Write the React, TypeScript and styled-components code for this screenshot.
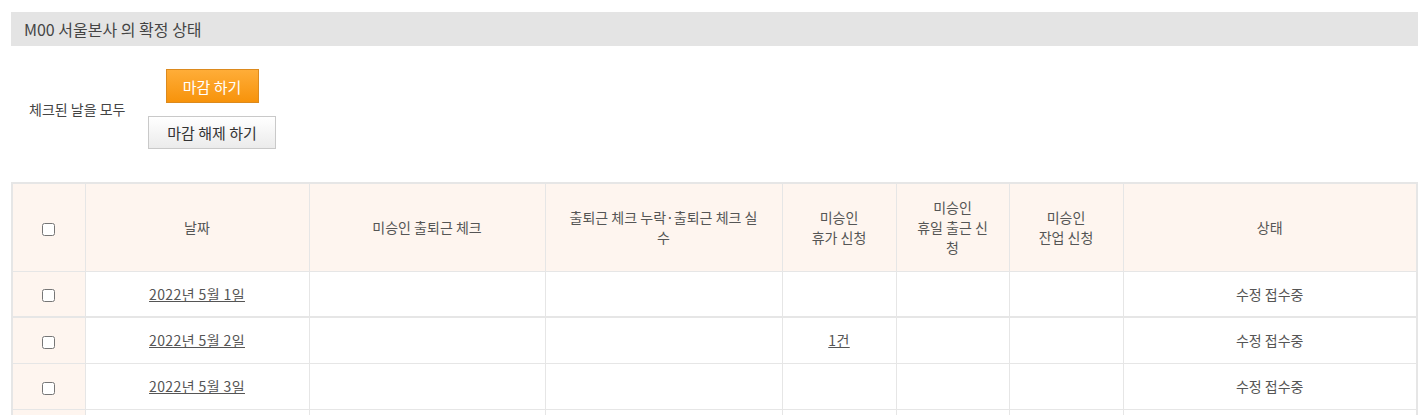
import React from "react";
import styled, { createGlobalStyle } from "styled-components";

const Global = createGlobalStyle`
  html, body { margin: 0; padding: 0; background: #fff; }
  body { font-family: "Noto Sans CJK KR", "Noto Sans", sans-serif; color: #555; }
`;

const Page = styled.div`
  padding: 12px 10px 0 11px;
`;

const TitleBar = styled.div`
  height: 34px;
  background: #e4e4e4;
  display: flex;
  align-items: center;
  padding-left: 13px;
  font-size: 16px;
  color: #444;
`;

const ActionRow = styled.div`
  display: flex;
  align-items: center;
  padding-left: 18px;
  margin-top: 23px;
`;

const ActionLabel = styled.div`
  width: 119px;
  font-size: 14px;
  color: #444;
`;

const ButtonColumn = styled.div`
  display: flex;
  flex-direction: column;
  align-items: center;
  gap: 13px;
`;

const Button = styled.button<{ $primary?: boolean }>`
  font-family: inherit;
  font-size: 15px;
  box-sizing: border-box;
  cursor: pointer;
  padding: 0 12px;
  height: ${(p) => (p.$primary ? "34px" : "33px")};
  min-width: ${(p) => (p.$primary ? "93px" : "128px")};
  color: ${(p) => (p.$primary ? "#fff" : "#333")};
  border: 1px solid ${(p) => (p.$primary ? "#dc8a1e" : "#c9c9c9")};
  background: ${(p) =>
    p.$primary
      ? "linear-gradient(#ffad38, #f7930b)"
      : "linear-gradient(#ffffff, #ebebeb)"};
  border-radius: 0;
`;

const Table = styled.table`
  margin-top: 33px;
  width: 100%;
  border-collapse: collapse;
  border: 2px solid #e6e6e6;
  table-layout: fixed;
  font-size: 14px;
`;

const HeadCell = styled.th<{ $w?: number }>`
  box-sizing: border-box;
  width: ${(p) => (p.$w ? `${p.$w}px` : "auto")};
  height: 88px;
  background: #fef5ef;
  border: 1px solid #e6e6e6;
  font-weight: normal;
  color: #555;
  padding: 0 10px;
  line-height: 20px;
  text-align: center;
  vertical-align: middle;
`;

const Row = styled.tr<{ $weekEnd?: boolean }>`
  & > td {
    border-bottom: ${(p) => (p.$weekEnd ? "2px" : "1px")} solid #e6e6e6;
  }
`;

const Cell = styled.td<{ $tint?: boolean }>`
  box-sizing: border-box;
  height: 46px;
  padding: 0 10px;
  border: 1px solid #e6e6e6;
  background: ${(p) => (p.$tint ? "#fef5ef" : "#fff")};
  text-align: center;
  vertical-align: middle;
  color: #555;
`;

const Check = styled.input.attrs({ type: "checkbox" })`
  margin: 0;
  width: 13px;
  height: 13px;
  vertical-align: middle;
`;

const Link = styled.a`
  color: #555;
  text-decoration: underline;
  letter-spacing: 0.4px;
  cursor: pointer;
`;

type RowData = { date: string; leave?: string; weekEnd?: boolean };

const rows: RowData[] = [
  { date: "2022년 5월 1일", weekEnd: true },
  { date: "2022년 5월 2일", leave: "1건" },
  { date: "2022년 5월 3일" },
  { date: "2022년 5월 4일" },
  { date: "2022년 5월 5일" },
];

export default function App() {
  return (
    <Page>
      <Global />
      <TitleBar>M00 서울본사 의 확정 상태</TitleBar>
      <ActionRow>
        <ActionLabel>체크된 날을 모두</ActionLabel>
        <ButtonColumn>
          <Button $primary>마감 하기</Button>
          <Button>마감 해제 하기</Button>
        </ButtonColumn>
      </ActionRow>
      <Table>
        <thead>
          <tr>
            <HeadCell $w={73}>
              <Check />
            </HeadCell>
            <HeadCell $w={224}>날짜</HeadCell>
            <HeadCell $w={236}>미승인 출퇴근 체크</HeadCell>
            <HeadCell $w={237}>
              출퇴근 체크 누락·출퇴근 체크 실<br />수
            </HeadCell>
            <HeadCell $w={114}>
              미승인
              <br />
              휴가 신청
            </HeadCell>
            <HeadCell $w={113}>
              미승인
              <br />
              휴일 출근 신<br />청
            </HeadCell>
            <HeadCell $w={114}>
              미승인
              <br />
              잔업 신청
            </HeadCell>
            <HeadCell>상태</HeadCell>
          </tr>
        </thead>
        <tbody>
          {rows.map((r) => (
            <Row key={r.date} $weekEnd={r.weekEnd}>
              <Cell $tint>
                <Check />
              </Cell>
              <Cell>
                <Link>{r.date}</Link>
              </Cell>
              <Cell />
              <Cell />
              <Cell>{r.leave ? <Link>{r.leave}</Link> : null}</Cell>
              <Cell />
              <Cell />
              <Cell>수정 접수중</Cell>
            </Row>
          ))}
        </tbody>
      </Table>
    </Page>
  );
}
